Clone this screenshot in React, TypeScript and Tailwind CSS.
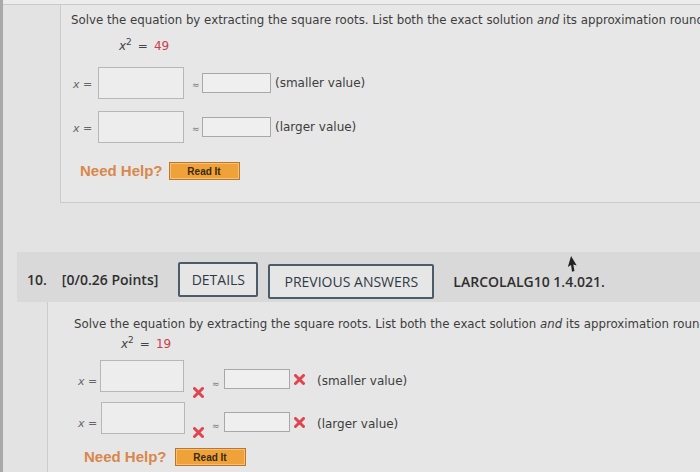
import React from "react";

const verd = { fontFamily: '"DejaVu Sans", Verdana, sans-serif' };
const open = { fontFamily: '"Open Sans", "Noto Sans", sans-serif' };
const arial = { fontFamily: '"Liberation Sans", Arial, sans-serif' };

function ReadIt({ className = "" }: { className?: string }) {
  return (
    <div
      className={`flex h-[18px] w-[71px] items-center justify-center border border-[#b8772e] bg-[#f0a23a] shadow-[inset_0_0_0_1px_#f8c070] ${className}`}
    >
      <span className="text-[10px] font-bold text-[#3a2a10]" style={arial}>
        Read It
      </span>
    </div>
  );
}

function NeedHelp() {
  return (
    <span className="text-[15px] font-bold text-[#d9874a]" style={arial}>
      Need Help?
    </span>
  );
}

function Cross({ className = "" }: { className?: string }) {
  return (
    <svg width="11" height="11" viewBox="0 0 11 11" className={className}>
      <path d="M1.5 1.5 L9.5 9.5 M9.5 1.5 L1.5 9.5" stroke="#e0444e" strokeWidth="3" strokeLinecap="round" />
    </svg>
  );
}

function Eq({ n }: { n: string }) {
  return (
    <div className="flex items-baseline text-[12px] text-[#444]" style={verd}>
      <span className="italic">x</span>
      <sup className="relative -top-[5px] text-[9px]">2</sup>
      <span className="ml-[6px]">=</span>
      <span className="ml-[6px] text-[#c8404e]">{n}</span>
    </div>
  );
}

function XEq() {
  return (
    <span className="text-[11px] text-[#666]" style={verd}>
      <span className="italic">x</span> =
    </span>
  );
}

function Approx() {
  return <span className="text-[9px] text-[#777]" style={verd}>≈</span>;
}

export default function App() {
  return (
    <div className="relative h-[472px] w-[700px] overflow-hidden bg-[#e3e3e3]">
      <div className="absolute left-0 top-0 h-full w-[3px] bg-[#a9a9a9]" />
      {/* top strip */}
      <div className="h-[5px] border-b border-[#c9c9c9] bg-[#ececec]" />

      {/* Panel 1 */}
      <div className="ml-[60px] h-[198px] border-b border-l border-[#cbcbcb] bg-[#e7e7e7] pl-[10px] pt-[7px]" style={verd}>
        <p className="whitespace-nowrap text-[11.8px] leading-[16px] text-[#3d3d3d]">
          Solve the equation by extracting the square roots. List both the exact solution <i>and</i> its approximation rounded to two decimal places.
        </p>
        <div className="ml-[48px] mt-[9px] h-[16px]">
          <Eq n="49" />
        </div>
        {/* row 1 */}
        <div className="mt-[14px] flex items-center">
          <div className="w-[27px] pl-[2px]"><XEq /></div>
          <div className="h-[32px] w-[86px] border border-[#b7b7b7] bg-[#ededed]" />
          <div className="ml-[8px] w-[10px]"><Approx /></div>
          <div className="h-[20px] w-[69px] border border-[#a8a8a8] bg-[#efefef]" />
          <span className="ml-[4px] text-[12px] text-[#3d3d3d]">(smaller value)</span>
        </div>
        {/* row 2 */}
        <div className="mt-[12px] flex items-center">
          <div className="w-[27px] pl-[2px]"><XEq /></div>
          <div className="h-[32px] w-[86px] border border-[#b7b7b7] bg-[#ededed]" />
          <div className="ml-[8px] w-[10px]"><Approx /></div>
          <div className="h-[20px] w-[69px] border border-[#a8a8a8] bg-[#efefef]" />
          <span className="ml-[4px] text-[12px] text-[#3d3d3d]">(larger value)</span>
        </div>
        <div className="ml-[9px] mt-[17px] flex items-center">
          <NeedHelp />
          <ReadIt className="ml-[6px]" />
        </div>
      </div>

      {/* Header 10 */}
      <div className="ml-[17px] mt-[49px] flex h-[50px] items-center bg-[#d9d9d9] pl-[10px] pt-[5px] text-[#2f2f2f]" style={open}>
        <span className="text-[14px] font-semibold">10.</span>
        <span className="ml-[15px] text-[14px] font-semibold">[0/0.26 Points]</span>
        <div className="ml-[20px] flex h-[35px] w-[80px] items-center justify-center rounded-[2px] border-2 border-[#4b5b6a] bg-[#e6e6e6] text-[14px] text-[#2f3a45]">
          DETAILS
        </div>
        <div className="ml-[10px] mt-[3px] flex h-[35px] w-[166px] items-center justify-center rounded-[2px] border-2 border-[#4b5b6a] bg-[#e6e6e6] text-[14px] text-[#2f3a45]">
          PREVIOUS ANSWERS
        </div>
        <span className="ml-[19px] mt-[3px] text-[14px] font-semibold">LARCOLALG10 1.4.021.</span>
      </div>

      {/* Panel 2 */}
      <div className="ml-[47px] h-[200px] border-l border-[#cbcbcb] bg-[#e6e6e6] pl-[26px] pt-[14px]" style={verd}>
        <p className="whitespace-nowrap text-[11.8px] leading-[16px] text-[#3d3d3d]">
          Solve the equation by extracting the square roots. List both the exact solution <i>and</i> its approximation rounded to two decimal places.
        </p>
        <div className="ml-[47px] mt-[3px] h-[16px]">
          <Eq n="19" />
        </div>
        {/* row 1 */}
        <div className="mt-[9px] flex items-start">
          <div className="mt-[8px] w-[26px] pl-[4px]"><XEq /></div>
          <div className="h-[32px] w-[84px] border border-[#b7b7b7] bg-[#ededed]" />
          <Cross className="ml-[9px] mt-[27px]" />
          <div className="ml-[8px] mt-[10px] w-[12px]"><Approx /></div>
          <div className="mt-[9px] h-[20px] w-[66px] border border-[#a8a8a8] bg-[#efefef]" />
          <Cross className="ml-[4px] mt-[14px]" />
          <span className="ml-[12px] mt-[12px] text-[12px] text-[#3d3d3d]">(smaller value)</span>
        </div>
        {/* row 2 */}
        <div className="mt-[4px] flex items-start">
          <div className="mt-[8px] w-[27px] pl-[4px]"><XEq /></div>
          <div className="h-[32px] w-[84px] border border-[#b7b7b7] bg-[#ededed]" />
          <Cross className="ml-[8px] mt-[25px]" />
          <div className="ml-[8px] mt-[10px] w-[12px]"><Approx /></div>
          <div className="mt-[10px] h-[20px] w-[66px] border border-[#a8a8a8] bg-[#efefef]" />
          <Cross className="ml-[4px] mt-[15px]" />
          <span className="ml-[12px] mt-[13px] text-[12px] text-[#3d3d3d]">(larger value)</span>
        </div>
        <div className="ml-[10px] mt-[8px] flex items-center">
          <NeedHelp />
          <ReadIt className="ml-[8px]" />
        </div>
      </div>

      {/* mouse cursor */}
      <svg className="absolute left-[566px] top-[256px]" width="12" height="17" viewBox="0 0 12 18">
        <path d="M5 0 L11 10 L7.4 9 L8.6 16 L6 16.6 L5 9.4 L1.6 11.6 Z" fill="#222" />
      </svg>
    </div>
  );
}
